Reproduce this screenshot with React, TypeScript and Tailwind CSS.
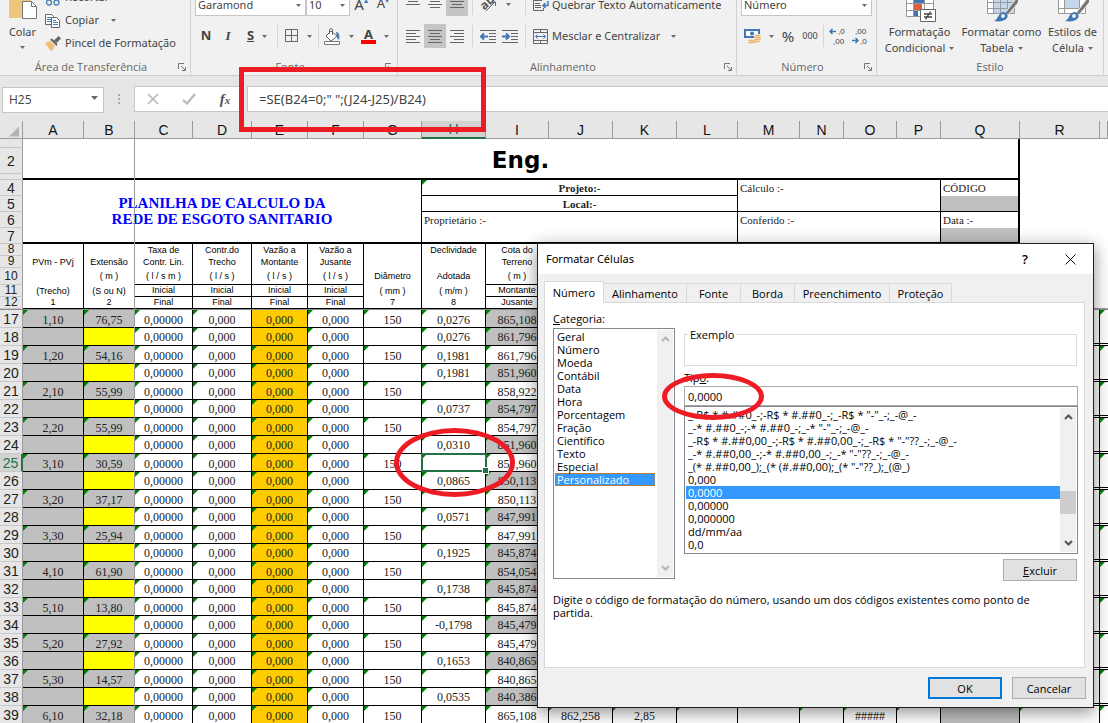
import React, { useState } from 'react';
import clsx from 'clsx';

const COLUMNS = [
    { id: 'A', width: 'w-[61px]' },
    { id: 'B', width: 'w-[51px]' },
    { id: 'C', width: 'w-[58px]' },
    { id: 'D', width: 'w-[59px]' },
    { id: 'E', width: 'w-[56px]' },
    { id: 'F', width: 'w-[56px]' },
    { id: 'G', width: 'w-[58px]' },
    { id: 'H', width: 'w-[64px]' },
    { id: 'I', width: 'w-[63px]' },
    { id: 'J', width: 'w-[64px]' },
    { id: 'K', width: 'w-[64px]' },
    { id: 'L', width: 'w-[61px]' },
    { id: 'M', width: 'w-[62px]' },
    { id: 'N', width: 'w-[44px]' },
    { id: 'O', width: 'w-[53px]' },
    { id: 'P', width: 'w-[44px]' },
    { id: 'Q', width: 'w-[79px]' },
    { id: 'R', width: 'w-[80px]' },
    { id: '', width: '' },
];

const HEADINGS = [
    ['', 'PVm - PVj', '', '(Trecho)', '1'],
    ['', 'Extensão', '( m )', '(S ou N)', '2'],
    ['Taxa de', 'Contr. Lin.', '( l / s m )', 'Inicial', 'Final'],
    ['Contr.do', 'Trecho', '( l / s )', 'Inicial', 'Final'],
    ['Vazão a', 'Montante', '( l / s )', 'Inicial', 'Final'],
    ['Vazão a', 'Jusante', '( l / s )', 'Inicial', 'Final'],
    ['', '', 'Diâmetro', '( mm )', '7'],
    ['Declividade', '', 'Adotada', '( m/m )', '8'],
    ['Cota do', 'Terreno', '( m )', 'Montante', 'Jusante'],
];

const HEADING_HEIGHTS = ['h-[12px]', 'h-[12px]', 'h-[17px]', 'h-[12px]', 'h-[12px]'];

// row number, trecho, extensão, declividade, cota
const ROWS: [number, string, string, string, string][] = [
    [17, '1,10', '76,75', '0,0276', '865,108'],
    [18, '', '', '0,0276', '861,796'],
    [19, '1,20', '54,16', '0,1981', '861,796'],
    [20, '', '', '0,1981', '851,960'],
    [21, '2,10', '55,99', '', '858,922'],
    [22, '', '', '0,0737', '854,797'],
    [23, '2,20', '55,99', '', '854,797'],
    [24, '', '', '0,0310', '851,960'],
    [25, '3,10', '30,59', '', '851,960'],
    [26, '', '', '0,0865', '850,113'],
    [27, '3,20', '37,17', '', '850,113'],
    [28, '', '', '0,0571', '847,991'],
    [29, '3,30', '25,94', '', '847,991'],
    [30, '', '', '0,1925', '845,874'],
    [31, '4,10', '61,90', '', '854,054'],
    [32, '', '', '0,1738', '845,874'],
    [33, '5,10', '13,80', '', '845,874'],
    [34, '', '', '-0,1798', '845,479'],
    [35, '5,20', '27,92', '', '845,479'],
    [36, '', '', '0,1653', '840,865'],
    [37, '5,30', '14,57', '', '840,865'],
    [38, '', '', '0,0535', '840,386'],
    [39, '6,10', '32,18', '', '865,108'],
];

const CATEGORIES = ['Geral', 'Número', 'Moeda', 'Contábil', 'Data', 'Hora', 'Porcentagem', 'Fração', 'Científico', 'Texto', 'Especial', 'Personalizado'];

const FORMATS = [
    '_-R$ * #.##0_-;-R$ * #.##0_-;_-R$ * "-"_-;_-@_-',
    '_-* #.##0_-;-* #.##0_-;_-* "-"_-;_-@_-',
    '_-R$ * #.##0,00_-;-R$ * #.##0,00_-;_-R$ * "-"??_-;_-@_-',
    '_-* #.##0,00_-;-* #.##0,00_-;_-* "-"??_-;_-@_-',
    '_(* #.##0,00_);_(* (#.##0,00);_(* "-"??_);_(@_)',
    '0,000',
    '0,0000',
    '0,00000',
    '0,000000',
    'dd/mm/aa',
    '0,0',
];

const TABS = [
    { name: 'Número', width: 'w-[60px]' },
    { name: 'Alinhamento', width: 'w-[83px]' },
    { name: 'Fonte', width: 'w-[54px]' },
    { name: 'Borda', width: 'w-[54px]' },
    { name: 'Preenchimento', width: 'w-[95px]' },
    { name: 'Proteção', width: 'w-[62px]' },
];

/* ---------- small drawings ---------- */

function Caret({ className }: { className?: string }) {
    return (
        <svg className={clsx('shrink-0', className)} width="5" height="3" viewBox="0 0 5 3" aria-hidden="true">
            <path d="M0 0h5L2.5 3z" fill="#6a6a6a" />
        </svg>
    );
}

function Launcher() {
    return (
        <svg width="8" height="8" viewBox="0 0 8 8" fill="none" stroke="#777" aria-hidden="true">
            <path d="M.5 6V.5H6M3 3l4 4M7.500 4v3.500H4" />
        </svg>
    );
}

function Lines({ rows }: { rows: [number, number][] }) {
    return (
        <svg width="14" height="13" viewBox="0 0 14 13" stroke="#666" aria-hidden="true">
            {rows.map(([start, end], i) => <path key={i} d={`M${start} ${i * 3 + 0.5}H${end}`} />)}
        </svg>
    );
}

function PasteIcon() {
    return (
        <svg width="30" height="30" viewBox="0 0 30 30" aria-hidden="true">
            <path d="M1 2h22v26H1z" fill="#eec77d" />
            <path d="M14.500 11.500h9l5 5v12h-14z" fill="#fff" stroke="#777" />
            <path d="M23.500 11.500v5h5" fill="none" stroke="#777" />
        </svg>
    );
}

function CutIcon() {
    return (
        <svg width="16" height="16" viewBox="0 0 16 16" fill="none" aria-hidden="true">
            <path d="M5 1l5 9M11 1L6 10" stroke="#666" />
            <circle cx="4" cy="12.500" r="2.500" stroke="#4a7fb5" strokeWidth="1.300" />
            <circle cx="11.500" cy="12.500" r="2.500" stroke="#4a7fb5" strokeWidth="1.300" />
        </svg>
    );
}

function CopyIcon() {
    return (
        <svg width="16" height="16" viewBox="0 0 16 16" fill="none" aria-hidden="true">
            <path d="M.5 1.500h6l2 2v8h-8z" fill="#fff" stroke="#666" />
            <path d="M2 4.500h4M2 6.500h4M2 8.500h4" stroke="#4a7fb5" />
            <path d="M6.500 4.500h5l3 3v7h-8z" fill="#fff" stroke="#666" />
            <path d="M8 7.500h3M8 9.500h5M8 11.500h5" stroke="#4a7fb5" />
        </svg>
    );
}

function BrushIcon() {
    return (
        <svg width="16" height="16" viewBox="0 0 16 16" aria-hidden="true">
            <path d="M0 7l5-2 5 5-3 5-2-1z" fill="#eec077" />
            <path d="M5 3.500l2-1 5.500 5.500-1 2z" fill="#666" />
            <path d="M9 4.500L13.500 0 16 2.500 11.500 7z" fill="#666" />
        </svg>
    );
}

function BordersIcon() {
    return (
        <svg width="14" height="14" viewBox="0 0 14 14" fill="none" stroke="#666" aria-hidden="true">
            <path d="M.5.5h12v12H.5zM6.500.5v12M.5 6.500h12" />
        </svg>
    );
}

function FillIcon() {
    return (
        <svg width="17" height="17" viewBox="0 0 17 17" fill="none" aria-hidden="true">
            <path d="M7 3l6 5-6 5-5-5z" fill="#fff" stroke="#666" />
            <path d="M5.500 6V1.500c0-1 3-1 3 0V7" stroke="#666" />
            <path d="M12 4c3 0 4 3 3 8l-2-2z" fill="#4a7fb5" />
            <path d="M.5 13.500h15v3H.5z" fill="#fff" stroke="#777" />
        </svg>
    );
}

function OrientationIcon() {
    return (
        <svg width="18" height="18" viewBox="0 0 18 18" fill="none" aria-hidden="true">
            <text x="1" y="13" fontSize="12" fontWeight="700" fill="#555" fontFamily="Open Sans, sans-serif" transform="rotate(-42 6 10)">ab</text>
            <path d="M6 16l9-9M11 7h4.500v4" stroke="#666" />
        </svg>
    );
}

function WrapIcon() {
    return (
        <svg width="16" height="16" viewBox="0 0 16 16" fill="none" aria-hidden="true">
            <path d="M9 3.500H.5v10h10V11" stroke="#666" />
            <path d="M2 6.500h5M2 8.500h6M2 10.500h6" stroke="#666" />
            <path d="M15 4v4.500h-5M12.500 6L10 8.500l2.500 2.500" stroke="#3f77b4" strokeWidth="1.500" />
        </svg>
    );
}

function MergeIcon() {
    return (
        <svg width="16" height="15" viewBox="0 0 16 15" fill="none" aria-hidden="true">
            <path d="M.5.5h14v14H.5zM.5 3.500h14M.5 11.500h14M7.500.5v3M7.500 11.500v3" stroke="#666" />
            <path d="M2.500 7.500h10M4.500 5.500l-2 2 2 2M10.500 5.500l2 2-2 2" stroke="#3f77b4" />
        </svg>
    );
}

function IndentIcon({ right }: { right?: boolean }) {
    return (
        <svg width="16" height="13" viewBox="0 0 16 13" fill="none" aria-hidden="true">
            <path d="M0 .5h16M9 3.500h7M9 6.500h7M9 9.500h7M0 12.500h16" stroke="#666" />
            <path d={right ? 'M0 6.500h7M4 3.500l3 3-3 3' : 'M1 6.500h7M4 3.500l-3 3 3 3'} stroke="#3f77b4" strokeWidth="2" />
        </svg>
    );
}

function MoneyIcon() {
    return (
        <svg width="17" height="17" viewBox="0 0 17 17" fill="none" aria-hidden="true">
            <path d="M1 2h14v7H1z" fill="#fff" stroke="#3f77b4" strokeWidth="2" />
            <circle cx="8" cy="5.500" r="2" fill="#3f77b4" />
            <path d="M10 6h7v8h-6v3H4v-6h6z" fill="#f1f1f1" />
            <path d="M11 7.500h5M11 9.500h5M11 11.500h5M5 12.500h5M5 14.500h5M11 13.500h4" stroke="#e6b66c" strokeWidth="1.500" strokeLinecap="round" />
        </svg>
    );
}

function DecimalIcon({ less }: { less?: boolean }) {
    return (
        <svg width="16" height="18" viewBox="0 0 16 18" fill="none" aria-hidden="true">
            <text x={less ? 4 : 9} y="7" fontSize="8" fill="#444" fontFamily="Liberation Sans, sans-serif">{less ? ',00' : ',0'}</text>
            <text x={less ? 9 : 4} y="17" fontSize="8" fill="#444" fontFamily="Liberation Sans, sans-serif">{less ? ',0' : ',00'}</text>
            <path d={less ? 'M1 13.500h6M4.500 11l2.500 2.500L4.500 16' : 'M1 4.500h6M3.500 2L1 4.500 3.500 7'} stroke="#3f77b4" strokeWidth="1.500" />
        </svg>
    );
}

function ConditionalIcon() {
    return (
        <svg width="32" height="32" viewBox="0 0 32 32" fill="none" aria-hidden="true">
            <path d="M2.500 1.500h27v25h-27z" fill="#fff" />
            <path d="M10 1h11v12H10z" fill="#3f77b4" />
            <path d="M10 14h8v6h-8z" fill="#d9603b" />
            <path d="M10 21h4v5h-4z" fill="#3f77b4" />
            <path d="M2.500 1.500h27v25h-27zM2.500 7.500h27M2.500 13.500h27M2.500 20.500h27M9.500 1.500v25M20.500 1.500v25" stroke="#999" />
            <path d="M16.500 19.500h15v12h-15z" fill="#fff" stroke="#666" />
            <path d="M20 24h8M20 27h8M26.500 21.500l-5 8" stroke="#444" strokeWidth="1.300" />
        </svg>
    );
}

function TableBrushIcon({ single }: { single?: boolean }) {
    return (
        <svg width="32" height="32" viewBox="0 0 32 32" fill="none" aria-hidden="true">
            <path d="M1.500 1.500h27v22h-27z" fill="#fff" />
            <path d={single ? 'M8 6h14v12H8z' : 'M8 7h20v16H8z'} fill="#c3d6ec" />
            <path
                d={single ? 'M1.500 1.500h27v22h-27zM7.500 1.500v22M22.500 1.500v22M1.500 5.500h27M1.500 18.500h27' : 'M1.500 1.500h27v22h-27zM7.500 1.500v22M14.500 1.500v22M21.500 1.500v22M1.500 6.500h27M1.500 12.500h27M1.500 18.500h27'}
                stroke="#999"
            />
            <path d="M19 23L29 10c2-2 5 0 3 3L22 25z" fill="#777" stroke="#f1f1f1" />
            <path d="M8 31c4-1 4-8 9-9 3 0 6 3 4 6s-7 4-13 3z" fill="#3f77b4" />
            <circle cx="17" cy="26" r="2" fill="#f1f1f1" />
        </svg>
    );
}

/* ---------- ribbon ---------- */

function Group({ label, width, launcher, children }: { label: string; width: string; launcher?: boolean; children: React.ReactNode }) {
    return (
        <section className={clsx('flex h-[75px] shrink-0 flex-col justify-end border-r border-[#d0d0d0]', width)}>
            {children}
            <div className="flex h-4 items-center px-1">
                <h2 className="grow text-center font-['Open_Sans',sans-serif] text-[11px] leading-4 text-[#666]">{label}</h2>
                {launcher && <button aria-label={`Opções de ${label}`}><Launcher /></button>}
            </div>
        </section>
    );
}

function Tool({ label, active, wide, children }: { label: string; active?: boolean; wide?: boolean; children: React.ReactNode }) {
    return (
        <button aria-label={label} className={clsx('flex h-6 shrink-0 items-center justify-center', wide ? 'w-9 gap-2' : 'w-[22px]', active && 'bg-[#c5c5c5]')}>
            {children}
        </button>
    );
}

function Divider({ tight }: { tight?: boolean }) {
    return <span className={clsx('h-[22px] w-px shrink-0 bg-[#d5d5d5]', tight ? 'mx-[2px]' : 'mx-1')} />;
}

function Combo({ label, value, width }: { label: string; value: string; width: string }) {
    return (
        <div className={clsx('relative shrink-0', width)}>
            <select aria-label={label} defaultValue={value} className="h-6 w-full appearance-none border border-[#c6c6c6] bg-white px-[2px] pt-[2px] leading-4 text-[#444]">
                <option>{value}</option>
            </select>
            <Caret className="pointer-events-none absolute top-[12px] right-[5px]" />
        </div>
    );
}

function StyleButton({ icon, first, second, width }: { icon: React.ReactNode; first: string; second: string; width: string }) {
    return (
        <button className={clsx('flex shrink-0 flex-col items-center leading-4 whitespace-nowrap', width)}>
            {icon}
            <span className="mt-[2px]">{first}</span>
            <span className="flex items-center gap-1">{second}<Caret /></span>
        </button>
    );
}

function Ribbon() {
    return (
        <div className="flex h-[76px] overflow-hidden border-b border-[#d0d0d0] bg-[#f1f1f1] font-['Noto_Sans','Open_Sans',sans-serif] text-[11px] text-[#444]">
            <Group label="Área de Transferência" width="w-[191px]" launcher>
                <div className="mb-1 flex items-end">
                    <button className="flex w-[45px] flex-col items-center leading-4">
                        <PasteIcon />
                        <span className="mt-1">Colar</span>
                        <Caret className="my-[6px]" />
                    </button>
                    <div className="flex flex-col">
                        <button className="flex h-[23px] items-center gap-1"><CutIcon />Recortar</button>
                        <button className="flex h-[23px] items-center gap-1"><CopyIcon />Copiar<Caret className="ml-2" /></button>
                        <button className="flex h-[23px] items-center gap-1 whitespace-nowrap"><BrushIcon />Pincel de Formatação</button>
                    </div>
                </div>
            </Group>

            <Group label="Fonte" width="w-[207px]" launcher>
                <div className="mb-[11px] flex flex-col gap-2 pl-1">
                    <div className="flex items-center">
                        <Combo label="Fonte" value="Garamond" width="w-[111px]" />
                        <Combo label="Tamanho" value="10" width="w-[44px]" />
                        <Tool label="Aumentar fonte"><span className="text-[15px]">A</span><span className="mb-2 text-[8px] text-[#3f77b4]">▴</span></Tool>
                        <Tool label="Diminuir fonte"><span className="text-[13px]">A</span><span className="mb-2 text-[8px] text-[#3f77b4]">▾</span></Tool>
                    </div>
                    <div className="flex items-center text-[13px]">
                        <Tool label="Negrito"><b>N</b></Tool>
                        <Tool label="Itálico"><i className="font-['Liberation_Serif',serif] font-bold">I</i></Tool>
                        <Tool label="Sublinhado" wide><b className="underline">S</b><Caret /></Tool>
                        <Divider tight />
                        <Tool label="Bordas" wide><BordersIcon /><Caret /></Tool>
                        <Divider tight />
                        <Tool label="Cor de preenchimento" wide><FillIcon /><Caret /></Tool>
                        <Tool label="Cor da fonte" wide><b className="border-b-4 border-[#f00] px-[3px] leading-3">A</b><Caret /></Tool>
                    </div>
                </div>
            </Group>

            <Group label="Alinhamento" width="w-[339px]" launcher>
                <div className="mb-[11px] flex flex-col gap-2 pl-1">
                    <div className="flex items-center">
                        <Tool label="Alinhar em cima"><Lines rows={[[0, 14], [2, 12], [0, 14]]} /></Tool>
                        <Tool label="Alinhar no meio"><Lines rows={[[0, 14], [2, 12], [0, 14], [2, 12]]} /></Tool>
                        <Tool label="Alinhar embaixo" active><Lines rows={[[0, 0], [0, 14], [2, 12], [0, 14]]} /></Tool>
                        <Divider />
                        <Tool label="Orientação" wide><OrientationIcon /><Caret /></Tool>
                        <span className="w-2" />
                        <Divider />
                        <button className="flex h-6 items-center gap-[3px] pt-[2px] pl-[3px] whitespace-nowrap"><WrapIcon />Quebrar Texto Automaticamente</button>
                    </div>
                    <div className="flex items-center">
                        <Tool label="Alinhar à esquerda"><Lines rows={[[0, 14], [0, 10], [0, 14], [0, 10], [0, 14]]} /></Tool>
                        <Tool label="Centralizar" active><Lines rows={[[0, 14], [2, 12], [0, 14], [2, 12], [0, 14]]} /></Tool>
                        <Tool label="Alinhar à direita"><Lines rows={[[0, 14], [4, 14], [0, 14], [4, 14], [0, 14]]} /></Tool>
                        <Divider />
                        <Tool label="Diminuir recuo"><IndentIcon /></Tool>
                        <Tool label="Aumentar recuo"><IndentIcon right /></Tool>
                        <Divider />
                        <button className="flex items-center gap-[3px] pl-[3px] whitespace-nowrap"><MergeIcon />Mesclar e Centralizar<Caret className="ml-2" /></button>
                    </div>
                </div>
            </Group>

            <Group label="Número" width="w-[140px]" launcher>
                <div className="mb-[11px] flex flex-col gap-2 pl-1">
                    <Combo label="Formato do número" value="Número" width="w-[131px]" />
                    <div className="flex items-center">
                        <Tool label="Formato de contabilização" wide><MoneyIcon /><Caret /></Tool>
                        <Tool label="Porcentagem"><span className="text-[15px]">%</span></Tool>
                        <Tool label="Separador de milhares"><span className="text-[9px]">000</span></Tool>
                        <Divider tight />
                        <Tool label="Aumentar casas decimais"><DecimalIcon /></Tool>
                        <Tool label="Diminuir casas decimais"><DecimalIcon less /></Tool>
                    </div>
                </div>
            </Group>

            <Group label="Estilo" width="w-[227px]">
                <div className="mb-[3px] flex pl-[3px]">
                    <StyleButton icon={<ConditionalIcon />} first="Formatação" second="Condicional" width="w-[79px]" />
                    <StyleButton icon={<TableBrushIcon />} first="Formatar como" second="Tabela" width="w-[85px]" />
                    <StyleButton icon={<TableBrushIcon single />} first="Estilos de" second="Célula" width="w-[57px]" />
                </div>
            </Group>
        </div>
    );
}

function FormulaBar() {
    const [formula, setFormula] = useState('=SE(B24=0;" ";(J24-J25)/B24)');

    return (
        <div className="flex h-[45px] items-start pt-[10px] pl-[2px]">
            <div className="relative w-[102px]">
                <input aria-label="Caixa de nome" defaultValue="H25" className="h-[26px] w-full border border-[#c6c6c6] bg-white px-[6px] text-xs text-[#444]" />
                <svg className="absolute top-[10px] right-[6px]" width="7" height="4" viewBox="0 0 7 4" aria-hidden="true"><path d="M0 0h7L3.500 4z" fill="#666" /></svg>
            </div>
            <span className="flex h-[26px] w-[30px] flex-col items-center justify-center gap-[2px]">
                <i className="size-[2px] bg-[#aaa]" /><i className="size-[2px] bg-[#aaa]" /><i className="size-[2px] bg-[#aaa]" />
            </span>
            <div className="flex h-[26px] w-[110px] items-center border border-r-0 border-[#c6c6c6] bg-white">
                <button aria-label="Cancelar entrada" className="flex w-[36px] justify-center">
                    <svg width="12" height="12" viewBox="0 0 12 12" stroke="#b8b8b8" strokeWidth="1.600"><path d="M1 1l10 10M11 1L1 11" /></svg>
                </button>
                <button aria-label="Confirmar entrada" className="flex w-[36px] justify-center">
                    <svg width="14" height="12" viewBox="0 0 14 12" fill="none" stroke="#b8b8b8" strokeWidth="2.200"><path d="M1 7l4 3.500L13 1" /></svg>
                </button>
                <button aria-label="Inserir função" className="flex w-[36px] items-baseline justify-center font-['Liberation_Serif',serif] text-[15px] font-bold text-[#555] italic">f<span className="text-[11px]">x</span></button>
            </div>
            <input
                aria-label="Barra de fórmulas"
                value={formula}
                onChange={e => setFormula(e.target.value)}
                className="ml-[3px] h-[26px] min-w-0 grow border border-r-0 border-[#c6c6c6] bg-white px-[11px] font-['Noto_Sans','Open_Sans',sans-serif] text-[13px] text-[#444]"
            />
        </div>
    );
}

/* ---------- sheet ---------- */

function RowHead({ n, active }: { n?: number; active?: boolean }) {
    const short = n !== undefined && n > 7 && n < 13;
    return (
        <th
            scope="row"
            className={clsx(
                'overflow-hidden border-r border-b border-b-[#c8c8c8] p-0 font-normal',
                short ? 'text-xs leading-[11px]' : 'text-[14px] leading-3',
                active ? 'border-r-2 border-r-[#217346] bg-[#d2d2d2] text-[#217346]' : 'border-r-[#9b9b9b] bg-[#e6e6e6] text-[#222]',
                n && n > 16 && n % 2 === 1 && 'pb-[2px]'
            )}
        >
            {n}
        </th>
    );
}

function Cell({ value, bg, flag, span, last, low, selected }: { value?: string; bg?: string; flag?: boolean; span?: number; last?: boolean; low?: boolean; selected?: boolean }) {
    return (
        <td
            rowSpan={span}
            className={clsx(
                'relative overflow-visible p-0 text-center text-xs leading-3 whitespace-nowrap',
                !last && 'border-r border-black',
                span === 2 ? 'border-b-[3px] border-double border-black' : 'border-b border-black',
                low && 'pb-px',
                bg ?? 'bg-white'
            )}
        >
            {flag && <span className="absolute top-0 left-0 size-[5px] bg-[#008000] [clip-path:polygon(0_0,100%_0,0_100%)]" />}
            {value}
            {selected && (
                <span className="absolute -inset-px z-10 -mr-px border-2 border-[#217346]">
                    <span className="absolute -right-[3px] -bottom-[3px] size-[5px] bg-[#217346] outline outline-white" />
                </span>
            )}
        </td>
    );
}

function DataRow({ row }: { row: [number, string, string, string, string] }) {
    const [n, trecho, extensao, declividade, cota] = row;
    const odd = n % 2 === 1;
    const totals = n === 39;

    return (
        <tr className={clsx('h-[18px]', odd ? 'align-bottom' : 'align-middle')}>
            <RowHead n={n} active={n === 25} />
            <Cell value={trecho} bg="bg-[#c0c0c0]" flag={odd} low={odd} />
            <Cell value={extensao} bg={odd ? 'bg-[#c0c0c0]' : 'bg-[#ffff00]'} flag={odd} low={odd} />
            <Cell value="0,00000" flag low={odd} />
            <Cell value="0,000" flag low={odd} />
            <Cell value="0,000" bg="bg-[#ffcc00]" flag={n > 18} low={odd} />
            <Cell value="0,000" flag low={odd} />
            <Cell value={odd ? '150' : ''} flag={odd} low={odd} />
            <Cell value={declividade} flag low={odd} selected={n === 25} />
            <Cell value={cota} bg={!odd || n === 17 || n === 31 ? 'bg-[#c0c0c0]' : 'bg-white'} flag low={odd} />
            <Cell value={totals ? '862,258' : ''} flag low={odd} />
            <Cell value={totals ? '2,85' : ''} flag low={odd} />
            <Cell flag />
            <Cell />
            <Cell flag />
            <Cell value={totals ? '#####' : ''} flag low={odd} />
            <Cell flag />
            <Cell bg="bg-[#c0c0c0]" />
            {odd && <Cell flag span={totals ? 1 : 2} />}
            {odd && <Cell flag span={totals ? 1 : 2} last />}
        </tr>
    );
}

function Sheet() {
    return (
        <div className="relative">
            <table className="w-full table-fixed border-separate border-spacing-0 bg-white font-['Liberation_Serif',serif] text-[#222]">
                <colgroup>
                    <col className="w-[23px]" />
                    {COLUMNS.map(c => <col key={c.id} className={c.width} />)}
                </colgroup>
                <thead className="font-['Liberation_Sans',Arial,sans-serif]">
                    <tr className="h-[18px]">
                        <th className="border-r border-b border-[#9b9b9b] bg-[#e6e6e6] p-0">
                            <span className="mt-1 ml-[9px] block size-[10px] bg-[#b5b5b5] [clip-path:polygon(100%_0,100%_100%,0_100%)]" />
                        </th>
                        {COLUMNS.map(c => (
                            <th
                                key={c.id}
                                scope="col"
                                className={clsx(
                                    'border-r border-b border-[#9b9b9b] p-0 text-[14px] leading-[14px] font-normal',
                                    c.id === 'H' ? 'border-b-2 border-b-[#217346] bg-[#d2d2d2] text-[#217346]' : 'bg-[#e6e6e6] text-[#111]'
                                )}
                            >
                                {c.id}
                            </th>
                        ))}
                    </tr>
                </thead>
                <tbody className="[&_th]:font-['Liberation_Sans',Arial,sans-serif]">
                    <tr className="h-[9px]">
                        <RowHead />
                        <td colSpan={17} className="border-r-2 border-black p-0" />
                        <td colSpan={2} rowSpan={12} className="border-b border-[#999] p-0" />
                    </tr>
                    <tr className="h-[26px]">
                        <RowHead n={2} />
                        <td colSpan={17} className="border-r-2 border-black p-0 pb-[2px] text-center font-['DejaVu_Sans',sans-serif] text-[23px] leading-6 font-bold text-black">Eng.</td>
                    </tr>
                    <tr className="h-[6px]">
                        <RowHead />
                        <td colSpan={17} className="border-r-2 border-b-2 border-black p-0" />
                    </tr>
                    <tr className="h-4 text-[11px] leading-3">
                        <RowHead n={4} />
                        <td colSpan={7} rowSpan={4} className="border-r border-b-2 border-black p-0 text-center text-[15px] leading-4 font-bold text-[#0000ff]">
                            PLANILHA DE CALCULO DA<br />REDE DE ESGOTO SANITARIO
                        </td>
                        <td colSpan={5} className="relative border-r border-b border-black p-0 text-center font-bold">
                            <span className="absolute top-0 left-0 size-[5px] bg-[#008000] [clip-path:polygon(0_0,100%_0,0_100%)]" />
                            Projeto:-
                        </td>
                        <td colSpan={4} rowSpan={2} className="border-r border-b border-black px-[2px] py-[2px] align-top">Cálculo :-</td>
                        <td className="border-r-2 border-black px-[2px] py-0">CÓDIGO</td>
                    </tr>
                    <tr className="h-4 text-[11px] leading-3">
                        <RowHead n={5} />
                        <td colSpan={5} className="border-r border-b border-black p-0 text-center font-bold">Local:-</td>
                        <td className="border-r-2 border-b border-black bg-[#c0c0c0] p-0" />
                    </tr>
                    <tr className="h-4 text-[11px] leading-3">
                        <RowHead n={6} />
                        <td colSpan={5} rowSpan={2} className="border-r border-b-2 border-black px-[2px] py-[2px] align-top">Proprietário :-</td>
                        <td colSpan={4} rowSpan={2} className="border-r border-b-2 border-black px-[2px] py-[2px] align-top">Conferido :-</td>
                        <td className="border-r-2 border-black px-[2px] py-0">Data :-</td>
                    </tr>
                    <tr className="h-4">
                        <RowHead n={7} />
                        <td className="border-r-2 border-b-2 border-black bg-[#c0c0c0] p-0" />
                    </tr>
                    {HEADING_HEIGHTS.map((height, i) => (
                        <tr key={i} className={clsx("font-['Liberation_Sans',Arial,sans-serif] text-[9px] leading-[9px] text-black", height)}>
                            <RowHead n={i + 8} />
                            {HEADINGS.map((lines, col) => {
                                const ruled = i === 4 || (i > 1 && ((col > 1 && col < 6) || col === 8));
                                return (
                                    <td key={col} className={clsx('border-r border-black p-0 text-center whitespace-nowrap', ruled && 'border-b')}>{lines[i]}</td>
                                );
                            })}
                            <td colSpan={8} className="border-b border-black p-0" />
                        </tr>
                    ))}
                    <tr className="h-px">
                        <td colSpan={20} className="h-px bg-[#8c8c8c] p-0" />
                    </tr>
                    {ROWS.map(row => <DataRow key={row[0]} row={row} />)}
                </tbody>
            </table>
            {/* frozen pane edge */}
            <span className="absolute top-0 bottom-0 left-[134px] w-px bg-[#9b9b9b]" />
        </div>
    );
}

/* ---------- dialog ---------- */

function Chevron({ down, dim }: { down?: boolean; dim?: boolean }) {
    return (
        <svg width="9" height="6" viewBox="0 0 9 6" fill="none" stroke={dim ? '#b5b5b5' : '#555'} strokeWidth="2" aria-hidden="true">
            <path d={down ? 'M1 1l3.500 3.500L8 1' : 'M1 5l3.500-3.500L8 5'} />
        </svg>
    );
}

function FormatDialog() {
    const [category, setCategory] = useState('Personalizado');
    const [format, setFormat] = useState('0,0000');

    return (
        <div role="dialog" aria-labelledby="dialog-title" className="absolute top-[243px] left-[537px] z-20 w-[557px] border border-[#222] bg-[#f0f0f0] text-[11px] leading-[13px] text-black shadow-[0_4px_16px_rgba(0,0,0,0.45)]">
            <header className="flex h-[30px] items-center bg-white pl-2">
                <h1 id="dialog-title" className="grow pb-[2px] font-['Noto_Sans','Open_Sans',sans-serif] text-[11px]">Formatar Células</h1>
                <button aria-label="Ajuda" className="w-[46px] text-[13px] font-semibold">?</button>
                <button aria-label="Fechar" className="flex w-[45px] justify-center">
                    <svg width="11" height="11" viewBox="0 0 11 11" stroke="#111"><path d="M.5.5l10 10M10.500.5l-10 10" /></svg>
                </button>
            </header>

            <div className="pt-[7px] pr-[7px] pb-2 pl-[6px]">
                <div role="tablist" className="flex items-end">
                    {TABS.map((tab, i) => (
                        <button
                            key={tab.name}
                            role="tab"
                            aria-selected={i === 0}
                            className={clsx(
                                'border-t border-r border-[#d9d9d9] whitespace-nowrap',
                                tab.width,
                                i === 0 ? 'relative -mb-px h-[22px] border-l bg-white' : 'h-[19px]'
                            )}
                        >
                            {tab.name}
                        </button>
                    ))}
                </div>

                <div role="tabpanel" className="mr-px h-[366px] border border-[#d9d9d9] bg-white pt-[9px] pr-[6px] pl-2">
                    <div className="flex gap-[9px]">
                        <div className="w-[122px]">
                            <div id="categories"><u>C</u>ategoria:</div>
                            <div className="mt-[3px] flex h-[251px] border border-[#828790] p-px">
                                <ul role="listbox" aria-labelledby="categories" className="grow">
                                    {CATEGORIES.map(name => (
                                        <li
                                            key={name}
                                            role="option"
                                            aria-selected={name === category}
                                            onClick={() => setCategory(name)}
                                            className={clsx('h-[13px] pl-[2px]', name === category && 'bg-[#3399ff] text-white outline-1 -outline-offset-1 outline-dotted outline-[#c47a2c]')}
                                        >
                                            {name}
                                        </li>
                                    ))}
                                </ul>
                                <div className="ml-[2px] flex w-4 flex-col items-center justify-between bg-[#f0f0f0] py-[6px]">
                                    <Chevron dim /><Chevron down dim />
                                </div>
                            </div>
                        </div>

                        <div className="grow">
                            <fieldset className="mt-4 mr-px h-[38px] border border-[#dcdcdc] pl-[3px]">
                                <legend className="px-[2px]">Exemplo</legend>
                            </fieldset>
                            <label htmlFor="format" className="mt-[5px] block">Tip<u>o</u>:</label>
                            <input id="format" value={format} onChange={e => setFormat(e.target.value)} className="mt-[2px] block h-5 w-full border border-[#aaa] px-[3px]" />
                            <div className="flex h-[148px] border border-[#828790] p-px">
                                <ul role="listbox" aria-label="Tipos" className="grow overflow-hidden">
                                    {FORMATS.map(code => (
                                        <li
                                            key={code}
                                            role="option"
                                            aria-selected={code === format}
                                            onClick={() => setFormat(code)}
                                            className={clsx('h-[13px] pl-[2px] whitespace-pre', code === format && 'bg-[#3399ff] text-white')}
                                        >
                                            {code}
                                        </li>
                                    ))}
                                </ul>
                                <div className="flex w-4 flex-col items-center bg-[#f0f0f0] py-[6px]">
                                    <Chevron />
                                    <span className="mt-[71px] mb-auto h-[23px] w-4 bg-[#cdcdcd]" />
                                    <Chevron down />
                                </div>
                            </div>
                            <div className="mt-[5px] mr-px flex justify-end">
                                <button className="h-[22px] w-[74px] border border-[#adadad] bg-[#e1e1e1]"><u>E</u>xcluir</button>
                            </div>
                        </div>
                    </div>
                    <p className="mt-3 w-[500px]">Digite o código de formatação do número, usando um dos códigos existentes como ponto de partida.</p>
                </div>

                <div className="mt-[9px] flex justify-end gap-[10px]">
                    <button className="h-[22px] w-[74px] border-2 border-[#0078d7] bg-[#e1e1e1]">OK</button>
                    <button className="h-[22px] w-[74px] border border-[#adadad] bg-[#e1e1e1]">Cancelar</button>
                </div>
            </div>
        </div>
    );
}

/* ---------- hand-drawn marks on top of everything ---------- */

function Marks() {
    return (
        <>
            <span className="pointer-events-none absolute top-[67px] left-[239px] z-30 h-[65px] w-[247px] border-[5px] border-[#ed1c24]" />
            <span className="pointer-events-none absolute top-[428px] left-[394px] z-10 h-[69px] w-[121px] rounded-[50%] border-[5px] border-[#ed1c24]" />
            <span className="pointer-events-none absolute top-[373px] left-[662px] z-30 h-[47px] w-[102px] rounded-[50%] border-[5px] border-[#ed1c24]" />
        </>
    );
}

export default function App() {
    return (
        <main className="relative overflow-hidden bg-[#e6e6e6] font-['Open_Sans','Noto_Sans',sans-serif]">
            <Ribbon />
            <FormulaBar />
            <Sheet />
            <FormatDialog />
            <Marks />
        </main>
    );
}
